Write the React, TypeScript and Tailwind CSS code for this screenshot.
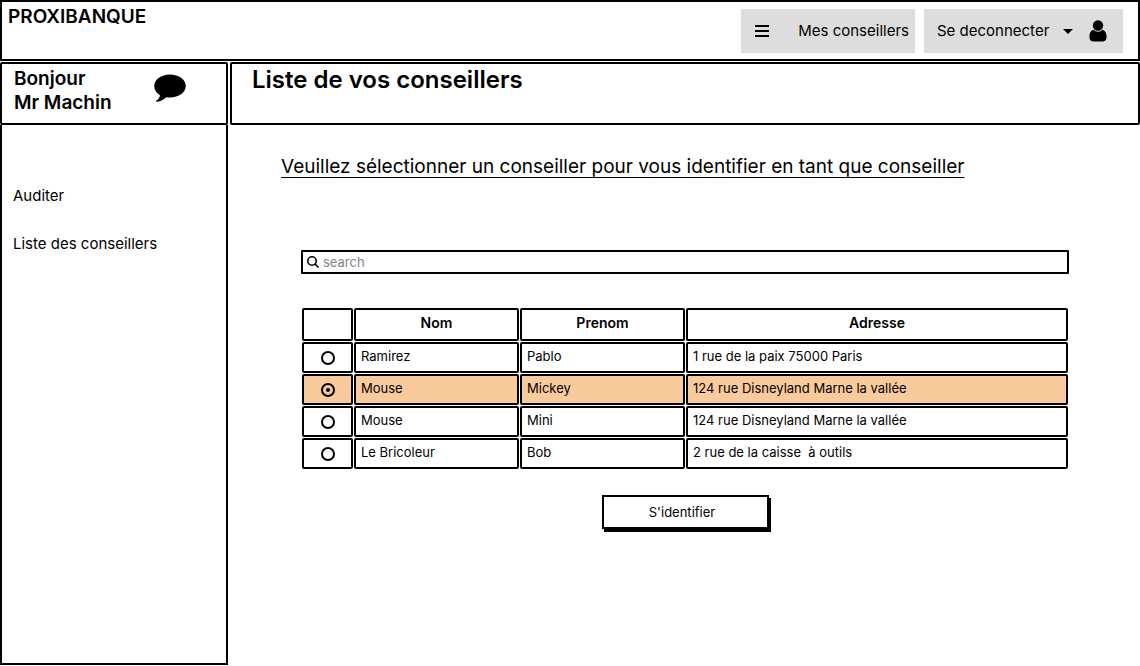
import { useState } from "react";

const advisors = [
  { nom: "Ramirez", prenom: "Pablo", adresse: "1 rue de la paix 75000 Paris" },
  { nom: "Mouse", prenom: "Mickey", adresse: "124 rue Disneyland Marne la vallée" },
  { nom: "Mouse", prenom: "Mini", adresse: "124 rue Disneyland Marne la vallée" },
  { nom: "Le Bricoleur", prenom: "Bob", adresse: "2 rue de la caisse  à outils" },
];

function SpeechBubble() {
  return (
    <svg viewBox="0 0 32 28" className="h-7 w-8" aria-hidden="true">
      <path d="M16 .5C7.200.5.2 5.500.2 12c0 3.900 2.200 7 5.800 9.200-.3 2.200-1.500 4.100-3.800 5.600-.5.400-.2 1 .5.900 4-.5 7.300-2.200 9.600-4.500 1.200.2 2.400.3 3.700.3 8.800 0 15.800-5 15.800-11.500S24.800.5 16 .5Z" />
    </svg>
  );
}

function UserIcon() {
  return (
    <svg viewBox="0 0 18 22" className="h-[22px] w-[18px]" aria-hidden="true">
      <circle cx="9" cy="5.500" r="5.200" />
      <path d="M4.400 9.800C1.600 10.600.4 13.400.4 17c0 2.800 1.300 4.400 3.600 4.400h10c2.300 0 3.600-1.600 3.600-4.400 0-3.600-1.200-6.400-4-7.200C12.400 11 10.800 11.700 9 11.700S5.600 11 4.400 9.800Z" />
    </svg>
  );
}

export default function App() {
  const [selected, setSelected] = useState(1);

  return (
    <div className="flex min-h-screen flex-col bg-white pb-px font-['Inter',sans-serif] text-black">
      <header className="flex h-[61px] items-start justify-between border-2 border-black pr-[15px] pl-1.5">
        <span className="pt-[3px] text-[19px] leading-6 font-semibold">PROXIBANQUE</span>
        <div className="flex gap-[9px] pt-[7px] text-[15px]">
          <button type="button" className="flex h-11 w-[174px] items-center justify-between bg-[#dddddd] pr-1.5 pl-3.5">
            <svg viewBox="0 0 14 12" className="h-3 w-3.5" aria-hidden="true">
              <path d="M0 0h14v2H0zM0 5h14v2H0zM0 10h14v2H0z" />
            </svg>
            Mes conseillers
          </button>
          <button type="button" className="flex h-11 w-[199px] items-center bg-[#dddddd] pr-4 pl-[13px]">
            Se deconnecter
            <svg viewBox="0 0 10 5" className="mr-auto ml-3.5 h-[5px] w-2.5" aria-hidden="true">
              <path d="M0 0h10L5 5z" />
            </svg>
            <UserIcon />
          </button>
        </div>
      </header>

      <div className="mt-px flex grow gap-0.5">
        <aside className="flex w-[228px] shrink-0 flex-col">
          <div className="flex h-[63px] items-start justify-between rounded-[2px] border-2 border-black pr-10 pl-3">
            <p className="pt-[3px] text-[19px] leading-6 font-semibold">
              Bonjour
              <br />
              Mr Machin
            </p>
            <div className="pt-2.5">
              <SpeechBubble />
            </div>
          </div>
          <nav className="flex grow flex-col items-start gap-6 border-2 border-t-0 border-black pt-[59px] pl-[11px] text-[15px] leading-6">
            <a href="#auditer">Auditer</a>
            <a href="#conseillers">Liste des conseillers</a>
          </nav>
        </aside>

        <main className="min-w-0 grow">
          <div className="h-[63px] rounded-[2px] border-2 border-black pt-0.5 pl-5">
            <h1 className="text-2xl leading-7 font-semibold">Liste de vos conseillers</h1>
          </div>
          <h2 className="pt-7 pl-[51px] text-[19px] leading-7 underline decoration-1 underline-offset-4">
            Veuillez sélectionner un conseiller pour vous identifier en tant que conseiller
          </h2>

          <div className="mx-auto w-[768px] max-w-full pt-[69px]">
            <label className="flex h-6 items-center gap-1 rounded-[1px] border-2 border-black px-1">
              <svg viewBox="0 0 12 12" className="size-3" fill="none" stroke="black" strokeWidth="1.600" aria-hidden="true">
                <circle cx="5" cy="5" r="4.200" />
                <path d="m8 8 3.500 3.500" />
              </svg>
              <input
                type="text"
                aria-label="search"
                placeholder="search"
                className="min-w-0 grow text-[13px] leading-4 outline-none placeholder:text-[#85828c]"
              />
            </label>

            <table className="mt-[33px] w-full table-fixed border-separate border-spacing-[1px] text-[13px] leading-4">
              <colgroup>
                <col className="w-[51px]" />
                <col className="w-[165px]" />
                <col className="w-[165px]" />
                <col />
              </colgroup>
              <thead>
                <tr className="h-[33px]">
                  <td className="rounded-[2px] border-2 border-black" />
                  <th className="rounded-[2px] border-2 border-black pb-1 text-sm font-semibold">Nom</th>
                  <th className="rounded-[2px] border-2 border-black pb-1 text-sm font-semibold">Prenom</th>
                  <th className="rounded-[2px] border-2 border-black pb-1 text-sm font-semibold">Adresse</th>
                </tr>
              </thead>
              <tbody>
                {advisors.map((a, i) => (
                  <tr key={i} className={i === selected ? "h-[31px] bg-[#f9cb9c]" : "h-[31px]"}>
                    <td className="rounded-[2px] border-2 border-black p-0">
                      <input
                        type="radio"
                        name="conseiller"
                        aria-label={`${a.prenom} ${a.nom}`}
                        checked={i === selected}
                        onChange={() => setSelected(i)}
                        className="mx-auto grid size-3.5 appearance-none place-items-center rounded-full border-2 border-black before:size-1 before:rounded-full checked:before:bg-black"
                      />
                    </td>
                    <td className="rounded-[2px] border-2 border-black p-0 pb-1 pl-[5px]">{a.nom}</td>
                    <td className="rounded-[2px] border-2 border-black p-0 pb-1 pl-[5px]">{a.prenom}</td>
                    <td className="rounded-[2px] border-2 border-black p-0 pb-1 pl-[5px] whitespace-pre">{a.adresse}</td>
                  </tr>
                ))}
              </tbody>
            </table>

            <button
              type="button"
              className="mx-auto mt-[25px] block h-[34px] w-[167px] border-2 border-black bg-white pr-1.5 text-[13px] leading-4 shadow-[2px_3px_0_0_#000]"
            >
              S'identifier
            </button>
          </div>
        </main>
      </div>
    </div>
  );
}
